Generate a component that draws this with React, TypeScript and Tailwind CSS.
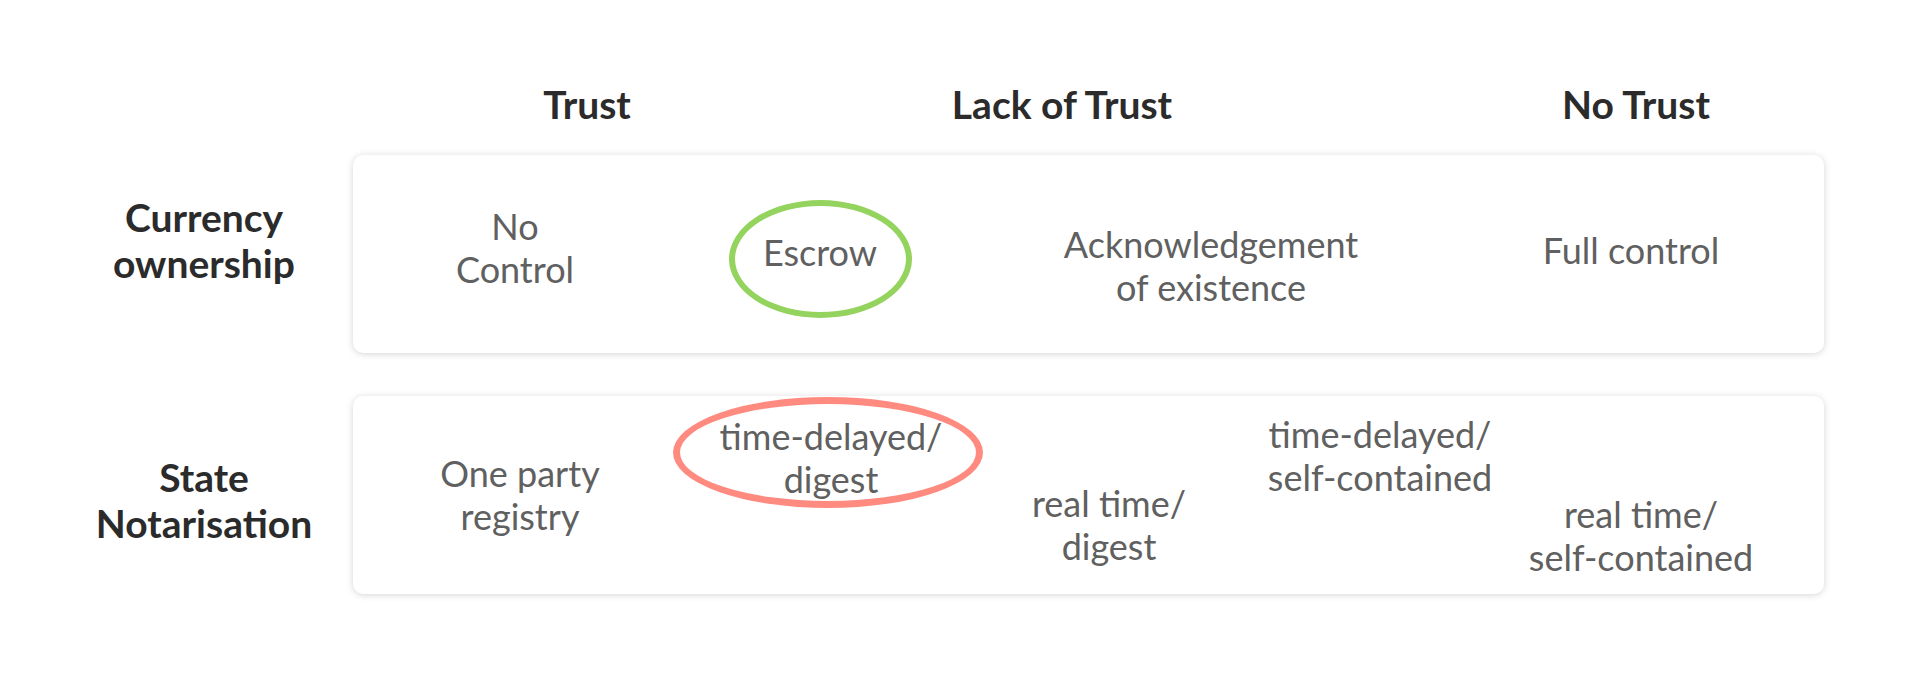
const headers = [
  { label: "Trust", className: "ml-[84px]" },
  { label: "Lack of Trust", className: "ml-[175px]" },
  { label: "No Trust", className: "ml-[274px]" },
];

function Cell({ lines, className = "" }: { lines: string[]; className?: string }) {
  return (
    <div className={`flex justify-center ${className}`}>
      <p className="whitespace-nowrap text-center text-[36px] leading-[43px] text-[#606060]">
        {lines.map((l, i) => (
          <span key={i} className="block">
            {l}
          </span>
        ))}
      </p>
    </div>
  );
}

function RowLabel({ lines, className = "" }: { lines: string[]; className?: string }) {
  return (
    <div className={`ml-[55px] w-[298px] self-start text-center text-[39px] font-bold leading-[46px] text-[#2b2b2b] ${className}`}>
      {lines.map((l, i) => (
        <span key={i} className="block">
          {l}
        </span>
      ))}
    </div>
  );
}

const card =
  "h-[198px] w-[1471px] rounded-[10px] bg-white shadow-[0_1px_7px_rgba(0,0,0,0.17)]";

export default function App() {
  return (
    <div className="h-[675px] w-full bg-white pt-[81px] font-['Lato',sans-serif]">
      {/* column headers */}
      <div className="flex pl-[353px]">
        {headers.map((h) => (
          <div
            key={h.label}
            className={`w-[300px] text-center text-[39px] font-bold leading-[46px] text-[#2b2b2b] ${h.className}`}
          >
            {h.label}
          </div>
        ))}
      </div>

      <div className="mt-[28px] flex flex-col gap-[43px]">
        {/* currency ownership */}
        <div className="flex">
          <RowLabel lines={["Currency", "ownership"]} className="mt-[39px]" />
          <div className={`${card} grid grid-cols-[324px_286px_496px_344px] items-start`}>
            <Cell lines={["No", "Control"]} className="mt-[50px]" />
            <div className="mt-[45px] flex justify-center">
              <div className="flex h-[118px] w-[183px] items-center justify-center rounded-[50%] border-[6px] border-[#94d35e] pb-[14px]">
                <span className="text-[36px] leading-[43px] text-[#606060]">Escrow</span>
              </div>
            </div>
            <Cell lines={["Acknowledgement", "of existence"]} className="mt-[68px]" />
            <Cell lines={["Full control"]} className="mt-[74px]" />
          </div>
        </div>

        {/* state notarisation */}
        <div className="flex">
          <RowLabel lines={["State", "Notarisation"]} className="mt-[58px]" />
          <div className={`${card} grid grid-cols-[334px_288px_268px_274px_248px] items-start`}>
            <Cell lines={["One party", "registry"]} className="mt-[56px]" />
            <div className="mt-px flex justify-center">
              <div className="-ml-[6px] flex h-[111px] w-[310px] shrink-0 items-center justify-center rounded-[50%] border-[7px] border-[#ff8b80] pl-[6px] pt-[11px]">
                <p className="whitespace-nowrap text-center text-[36px] leading-[43px] text-[#606060]">
                  <span className="block">time-delayed/</span>
                  <span className="block">digest</span>
                </p>
              </div>
            </div>
            <Cell lines={["real time/", "digest"]} className="mt-[86px]" />
            <Cell lines={["time-delayed/", "self-contained"]} className="mt-[17px]" />
            <Cell lines={["real time/", "self-contained"]} className="mt-[97px]" />
          </div>
        </div>
      </div>
    </div>
  );
}
